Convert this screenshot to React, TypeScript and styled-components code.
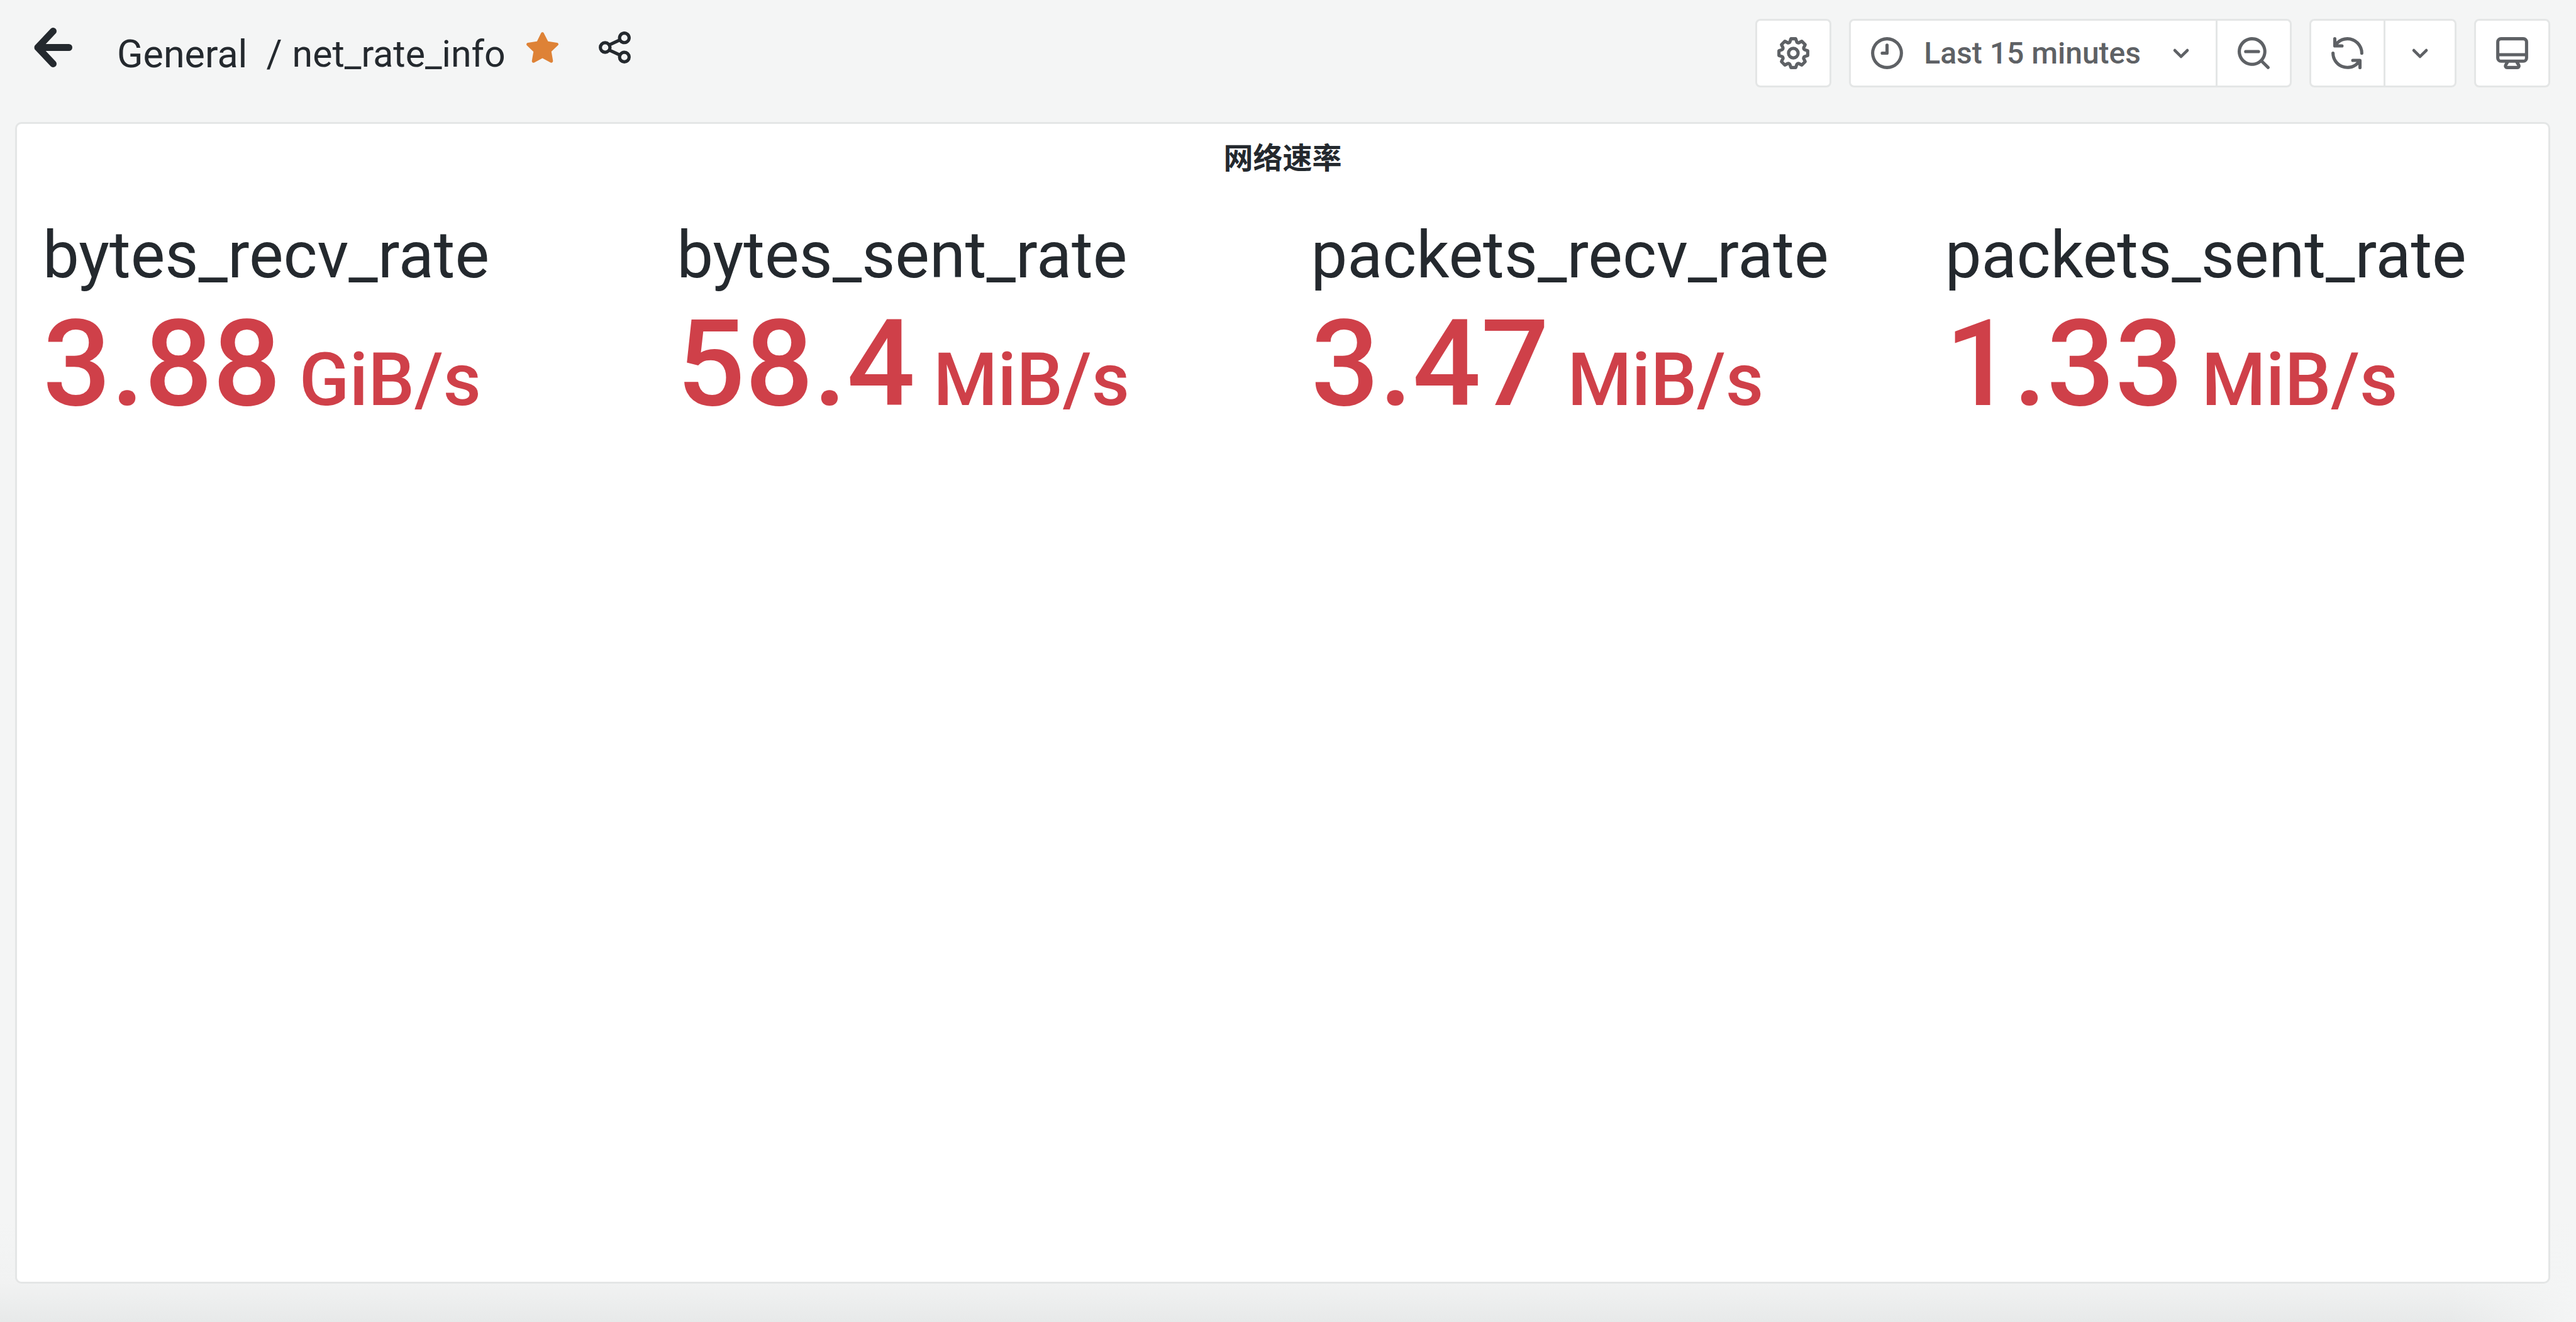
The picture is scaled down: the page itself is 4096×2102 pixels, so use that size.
import React from "react";
import styled, { createGlobalStyle } from "styled-components";

const GlobalStyle = createGlobalStyle`
  *, *::before, *::after { box-sizing: border-box; }
  body {
    margin: 0;
    background: #f4f5f5;
    color: #24292e;
    font-family: Roboto, "Liberation Sans", "Noto Sans CJK SC", sans-serif;
  }
`;

const Page = styled.div`
  display: flex;
  flex-direction: column;
  min-height: 100vh;
  padding: 30px 41px 61px 24px;
  background:
    linear-gradient(to left, #f4f5f5 0, rgba(244, 245, 245, 0) 200px),
    linear-gradient(to top, #e7e9e9 0, #f1f2f2 61px, #f4f5f5 160px);
`;

const Header = styled.header`
  display: flex;
  justify-content: space-between;
  align-items: flex-start;
  height: 164px;
  padding-left: 30px;
`;

const TitleArea = styled.div`
  display: flex;
  align-items: flex-start;
`;

const IconButton = styled.button<{ $color?: string }>`
  display: flex;
  align-items: center;
  height: 90px;
  padding: 0;
  border: 0;
  background: none;
  color: ${(p) => p.$color ?? "#24292e"};
`;

const Share = styled(IconButton)`
  margin-left: 54px;
`;

const Breadcrumbs = styled.nav`
  display: flex;
  gap: 16px;
  margin: 0 28px 0 71px;
  font-size: 61px;
  line-height: 112px;
  white-space: nowrap;
`;

const Crumb = styled.a`
  color: inherit;
  text-decoration: none;
`;

const CurrentCrumb = styled(Crumb)`
  font-size: 59px;
`;

const Separator = styled.span`
  margin-left: 14px;
`;

const Actions = styled.div`
  display: flex;
  gap: 28px;
`;

const ButtonGroup = styled.div`
  display: flex;
  border: 3px solid #e4e6e6;
  border-radius: 8px;
  background: #fff;
  overflow: hidden;
`;

const ToolButton = styled.button`
  display: flex;
  align-items: center;
  justify-content: center;
  height: 103px;
  padding: 0 27px;
  border: 0;
  background: none;
  color: #5e6165;
  font-family: inherit;
  font-size: 48px;
  font-weight: 500;
  line-height: 56px;
  white-space: nowrap;

  & + & {
    border-left: 3px solid #e4e6e6;
  }
`;

const RangeLabel = styled.span`
  margin: 0 36px 0 28px;
`;

const Panel = styled.section`
  flex: 1;
  border: 3px solid #e4e6e6;
  border-radius: 10px;
  background: #fff;
`;

const PanelTitle = styled.h2`
  margin: 0;
  font-size: 47px;
  font-weight: 700;
  line-height: 110px;
  text-align: center;
`;

const Stats = styled.div`
  display: grid;
  grid-template-columns: repeat(4, minmax(0, 1fr));
  gap: 90px;
  padding: 39px 41px;
`;

const StatName = styled.div`
  font-size: 103px;
  line-height: 120px;
  white-space: nowrap;
`;

const StatValue = styled.div`
  color: #cf4049;
  font-size: 191px;
  font-weight: 500;
  line-height: 226px;
  white-space: nowrap;
`;

const Unit = styled.span`
  margin-left: 29px;
  font-size: 117px;
`;

const icons = {
  star: "M22,10.1c0.1-0.5-0.3-1.1-0.8-1.1l-5.7-0.8L12.9,3c-0.1-0.2-0.2-0.3-0.4-0.4C12,2.3,11.4,2.5,11.1,3L8.6,8.2L2.9,9C2.6,9,2.4,9.1,2.3,9.3c-0.4,0.4-0.4,1,0,1.4l4.1,4l-1,5.7c0,0.2,0,0.4,0.1,0.6c0.3,0.5,0.9,0.7,1.4,0.4l5.1-2.7l5.1,2.7c0.1,0.1,0.3,0.1,0.5,0.1v0c0.1,0,0.1,0,0.2,0c0.5-0.1,0.9-0.6,0.8-1.2l-1-5.7l4.1-4C21.9,10.5,22,10.3,22,10.1z",
  share: "M18,14a4,4,0,0,0-3.08,1.48l-5.1-2.35a3.64,3.64,0,0,0,0-2.26l5.1-2.35A4,4,0,1,0,14,6a4.17,4.17,0,0,0,.07.71L8.79,9.14a4,4,0,1,0,0,5.72l5.28,2.43A4.17,4.17,0,0,0,14,18a4,4,0,1,0,4-4ZM18,4a2,2,0,1,1-2,2A2,2,0,0,1,18,4ZM6,14a2,2,0,1,1,2-2A2,2,0,0,1,6,14Zm12,6a2,2,0,1,1,2-2A2,2,0,0,1,18,20Z",
  cog: "M21.32,9.55l-1.89-.63.89-1.78A1,1,0,0,0,20.13,6L18,3.87a1,1,0,0,0-1.15-.19l-1.78.89-.63-1.89A1,1,0,0,0,13.5,2h-3a1,1,0,0,0-.95.68L8.92,4.57,7.14,3.68A1,1,0,0,0,6,3.87L3.87,6a1,1,0,0,0-.19,1.15l.89,1.78-1.89.63A1,1,0,0,0,2,10.5v3a1,1,0,0,0,.68.95l1.89.63-.89,1.78A1,1,0,0,0,3.87,18L6,20.13a1,1,0,0,0,1.15.19l1.78-.89.63,1.89a1,1,0,0,0,.95.68h3a1,1,0,0,0,.95-.68l.63-1.89,1.78.89A1,1,0,0,0,18,20.13L20.13,18a1,1,0,0,0,.19-1.15l-.89-1.78,1.89-.63A1,1,0,0,0,22,13.5v-3A1,1,0,0,0,21.32,9.55ZM20,12.78l-1.2.4A2,2,0,0,0,17.64,16l.57,1.14-1.1,1.1L16,17.64a2,2,0,0,0-2.79,1.16l-.4,1.2H11.22l-.4-1.2A2,2,0,0,0,8,17.64l-1.14.57-1.1-1.1L6.36,16A2,2,0,0,0,5.2,13.18L4,12.78V11.22l1.2-.4A2,2,0,0,0,6.36,8L5.79,6.89l1.1-1.1L8,6.36A2,2,0,0,0,10.82,5.2l.4-1.2h1.56l.4,1.2A2,2,0,0,0,16,6.36l1.14-.57,1.1,1.1L17.64,8a2,2,0,0,0,1.16,2.79l1.2.4ZM12,8a4,4,0,1,0,4,4A4,4,0,0,0,12,8Zm0,6a2,2,0,1,1,2-2A2,2,0,0,1,12,14Z",
  clock: "M12,2A10,10,0,1,0,22,12,10,10,0,0,0,12,2Zm0,18a8,8,0,1,1,8-8A8,8,0,0,1,12,20ZM12,6a1,1,0,0,0-1,1v4H9a1,1,0,0,0,0,2h3a1,1,0,0,0,1-1V7A1,1,0,0,0,12,6Z",
  angleDown: "M17,9.17a1,1,0,0,0-1.41,0L12,12.71,8.46,9.17a1,1,0,0,0-1.41,0,1,1,0,0,0,0,1.42l4.24,4.24a1,1,0,0,0,1.42,0L17,10.59A1,1,0,0,0,17,9.17Z",
  zoomOut: "M21.71,20.29,18,16.61A9,9,0,1,0,16.61,18l3.68,3.68a1,1,0,0,0,1.42,0A1,1,0,0,0,21.71,20.29ZM11,18a7,7,0,1,1,7-7A7,7,0,0,1,11,18Zm4-8H7a1,1,0,0,0,0,2h8a1,1,0,0,0,0-2Z",
  sync: "M19.91,15.51H15.38a1,1,0,0,0,0,2h2.4A8,8,0,0,1,4,12a1,1,0,0,0-2,0,10,10,0,0,0,16.88,7.23V21a1,1,0,0,0,2,0V16.5A1,1,0,0,0,19.91,15.51ZM12,2A10,10,0,0,0,5.12,4.77V3a1,1,0,0,0-2,0V7.5a1,1,0,0,0,1,1h4.5a1,1,0,0,0,0-2H6.22A8,8,0,0,1,20,12a1,1,0,0,0,2,0A10,10,0,0,0,12,2Z",
  monitor: "M19,2H5A3,3,0,0,0,2,5V15a3,3,0,0,0,3,3H7.64l-.58,1a2,2,0,0,0,0,2,2,2,0,0,0,1.75,1h6.46A2,2,0,0,0,17,21a2,2,0,0,0,0-2l-.59-1H19a3,3,0,0,0,3-3V5A3,3,0,0,0,19,2ZM8.77,20,10,18H14l1.2,2ZM20,15a1,1,0,0,1-1,1H5a1,1,0,0,1-1-1V14H20Zm0-3H4V5A1,1,0,0,1,5,4H19a1,1,0,0,1,1,1Z",
};

const Icon = ({ name, size = 61 }: { name: keyof typeof icons; size?: number }) => (
  <svg width={size} height={size} viewBox="0 0 24 24" fill="currentColor" aria-hidden="true">
    <path d={icons[name]} />
  </svg>
);

const BackArrow = () => (
  <svg
    width="61"
    height="63"
    viewBox="0 0 61 63"
    fill="none"
    stroke="currentColor"
    strokeWidth="11"
    strokeLinecap="round"
    strokeLinejoin="round"
    aria-hidden="true"
  >
    <path d="M30.5 5.5 6 31.5 30.5 57.5M6 31.5H55.5" />
  </svg>
);

const stats = [
  { name: "bytes_recv_rate", value: "3.88", unit: "GiB/s" },
  { name: "bytes_sent_rate", value: "58.4", unit: "MiB/s" },
  { name: "packets_recv_rate", value: "3.47", unit: "MiB/s" },
  { name: "packets_sent_rate", value: "1.33", unit: "MiB/s" },
];

export default function App() {
  return (
    <Page>
      <GlobalStyle />
      <Header>
        <TitleArea>
          <IconButton type="button" aria-label="Go back">
            <BackArrow />
          </IconButton>
          <Breadcrumbs aria-label="Breadcrumb">
            <Crumb href="#general">General</Crumb>
            <Separator aria-hidden="true">/</Separator>
            <CurrentCrumb href="#net_rate_info">net_rate_info</CurrentCrumb>
          </Breadcrumbs>
          <IconButton type="button" aria-label="Unmark as favorite" $color="#de8236">
            <Icon name="star" />
          </IconButton>
          <Share type="button" aria-label="Share dashboard">
            <Icon name="share" />
          </Share>
        </TitleArea>
        <Actions>
          <ButtonGroup>
            <ToolButton type="button" aria-label="Dashboard settings">
              <Icon name="cog" />
            </ToolButton>
          </ButtonGroup>
          <ButtonGroup>
            <ToolButton type="button">
              <Icon name="clock" />
              <RangeLabel>Last 15 minutes</RangeLabel>
              <Icon name="angleDown" size={56} />
            </ToolButton>
            <ToolButton type="button" aria-label="Zoom out time range">
              <Icon name="zoomOut" />
            </ToolButton>
          </ButtonGroup>
          <ButtonGroup>
            <ToolButton type="button" aria-label="Refresh dashboard">
              <Icon name="sync" />
            </ToolButton>
            <ToolButton type="button" aria-label="Choose refresh interval">
              <Icon name="angleDown" size={56} />
            </ToolButton>
          </ButtonGroup>
          <ButtonGroup>
            <ToolButton type="button" aria-label="Cycle view mode">
              <Icon name="monitor" />
            </ToolButton>
          </ButtonGroup>
        </Actions>
      </Header>
      <Panel>
        <PanelTitle>网络速率</PanelTitle>
        <Stats>
          {stats.map((s) => (
            <div key={s.name}>
              <StatName>{s.name}</StatName>
              <StatValue>
                {s.value}
                <Unit>{s.unit}</Unit>
              </StatValue>
            </div>
          ))}
        </Stats>
      </Panel>
    </Page>
  );
}
